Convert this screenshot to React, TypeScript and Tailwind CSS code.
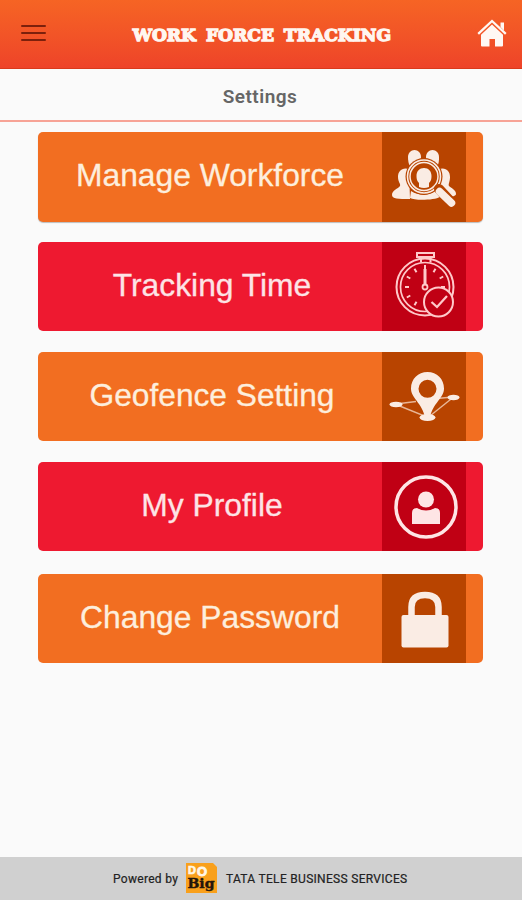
import type { ReactNode } from "react";
import clsx from "clsx";

type Tone = "orange" | "red";

interface MenuItem {
  label: string;
  tone: Tone;
  icon: ReactNode;
  className: string;
  labelClass: string;
}

const items: MenuItem[] = [
  {
    label: "Manage Workforce",
    tone: "orange",
    icon: <WorkforceIcon />,
    className: "h-[90px] shadow-[0_1px_1px_rgba(0,0,0,0.25)]",
    labelClass: "text-[31.8px] pb-[2px]",
  },
  {
    label: "Tracking Time",
    tone: "red",
    icon: <StopwatchIcon />,
    className: "mt-5 h-[89px]",
    labelClass: "text-[31.8px] pl-1 pb-[2px]",
  },
  {
    label: "Geofence Setting",
    tone: "orange",
    icon: <GeofenceIcon />,
    className: "mt-[21px] h-[89px]",
    labelClass: "text-[31.7px] pl-1 pb-px",
  },
  {
    label: "My Profile",
    tone: "red",
    icon: <ProfileIcon />,
    className: "mt-[21px] h-[89px]",
    labelClass: "text-[31.8px] pl-1 pb-[2px]",
  },
  {
    label: "Change Password",
    tone: "orange",
    icon: <LockIcon />,
    className: "mt-[23px] h-[89px]",
    labelClass: "text-[31.8px] pb-px",
  },
];

export default function App() {
  return (
    <div className="flex h-[900px] w-[522px] flex-col overflow-hidden bg-[#fafafa]">
      <header className="flex h-[69px] shrink-0 items-center justify-between border-b border-[#d93a1c] bg-linear-to-b from-[#f66424] to-[#ee4329] pr-[15px] pl-[21px]">
        <button aria-label="Menu" className="flex w-[25px] flex-col gap-[5px] pb-0.5">
          <span className="h-[2px] rounded-full bg-[#7c200c]" />
          <span className="h-[2px] rounded-full bg-[#7c200c]" />
          <span className="h-[2px] rounded-full bg-[#7c200c]" />
        </button>
        <h1 className="flex w-[262px] justify-center pt-[3px] font-['DejaVu_Serif',serif] text-[17.5px] leading-none font-bold whitespace-nowrap text-[#fff6f0] [-webkit-text-stroke:1.3px_#fff6f0]">
          <span className="scale-x-[0.98] [word-spacing:4px]">WORK FORCE TRACKING</span>
        </h1>
        <HomeIcon />
      </header>

      <div className="flex h-[53px] shrink-0 items-center justify-center border-b-2 border-[#f7a396]">
        <h2 className="pt-[3px] pr-0.5 font-[Roboto,sans-serif] text-[19px] leading-none font-semibold tracking-[0.5px] text-[#666]">Settings</h2>
      </div>

      <main className="flex flex-1 flex-col pt-[10px] pr-[39px] pl-[38px]">
        {items.map((item) => (
          <MenuButton key={item.label} item={item} />
        ))}
      </main>

      <footer className="flex h-[43px] shrink-0 items-center bg-[#d0d0d0] pl-[113px] font-[Roboto,sans-serif] text-[12px] tracking-[0.3px] text-[#222] [-webkit-text-stroke:0.2px_#222]">
        <span className="w-[73px] whitespace-nowrap">Powered by</span>
        <DoBigLogo />
        <span className="pl-[9px] whitespace-nowrap">TATA TELE BUSINESS SERVICES</span>
      </footer>
    </div>
  );
}

function MenuButton({ item }: { item: MenuItem }) {
  const orange = item.tone === "orange";
  return (
    <button
      className={clsx(
        "flex w-full shrink-0 overflow-hidden rounded-[5px]",
        orange ? "bg-[#f26e21]" : "bg-[#ee1930]",
        item.className,
      )}
    >
      <span
        className={clsx(
          "flex h-full w-[344px] items-center justify-center font-['Liberation_Sans',Arial,sans-serif] leading-none whitespace-nowrap",
          orange ? "text-[#fdeedd] [-webkit-text-stroke:0.3px_#fdeedd]" : "text-[#fde4e6] [-webkit-text-stroke:0.3px_#fde4e6]",
          item.labelClass,
        )}
      >
        {item.label}
      </span>
      <span className={clsx("h-full w-[84px]", orange ? "bg-[#b84400]" : "bg-[#c00014]")}>{item.icon}</span>
    </button>
  );
}

function HomeIcon() {
  return (
    <svg width="30" height="28" viewBox="0 0 30 28" fill="#fff8f4" className="mb-0.5">
      <path d="M23.500 3.500h3.500v8l-3.500-3.500z" />
      <path d="M1.200 14.800 15 2l13.800 12.800" fill="none" stroke="#fff8f4" strokeWidth="2.300" />
      <path d="M15 5.500 26 15.800V26.500q0 1-1 1H18V20h-5.500v7.500H5q-1 0-1-1V15.800z" />
    </svg>
  );
}

function WorkforceIcon() {
  return (
    <svg width="84" height="89" viewBox="0 0 84 89" fill="#faece4">
      <path d="M26 25c0-4 3-7 6.500-7s6.500 3 6.500 7c0 3-1 5-2.500 6.500L28 34c-1.500-2-2-6-2-9z" />
      <path d="M44 25c0-4 3-7 6.500-7s6.500 3 6.500 7c0 3 0 7-2 9l-8.500-2.500C45 30 44 28 44 25z" />
      <path d="M27 37c-7-2-11 2-11 8 0 5 3 7 2 9-2 3-8 4-8 9 0 4 6 4 18 4z" />
      <path d="M57 37c7-2 11 2 11 8 0 5-2 7-1 9 2 2 7 4 7 8 0 2-4 3-8 3L56 56z" />
      <path d="M29 59c8 5 17 5 24 0l5 6c-5 3-25 4-30 1z" />
      <circle cx="42" cy="44.500" r="18.500" fill="#b84400" />
      <circle cx="42" cy="44.500" r="16.500" fill="none" stroke="#faece4" strokeWidth="1.600" />
      <circle cx="42" cy="44.500" r="14" fill="none" stroke="#faece4" strokeWidth="1.500" />
      <path d="M37 55v-4c-2-2-2.500-4-2.500-7 0-5 3-8 7.500-8s7.500 3 7.500 8c0 3-.5 5-2.500 7v4q-5 2-10 0z" />
      <path d="m57 57 13 14" stroke="#b84400" strokeWidth="10" strokeLinecap="round" />
      <path d="m57.500 59.500 12 11.500" stroke="#faece4" strokeWidth="7.500" strokeLinecap="round" />
    </svg>
  );
}

function StopwatchIcon() {
  return (
    <svg width="84" height="89" viewBox="0 0 84 89" fill="none" stroke="#ffc9ca">
      <path d="M35 11h17v4H35zM39 15.500v5M48.500 15.500v5" strokeWidth="2" />
      <circle cx="43" cy="45" r="28.500" strokeWidth="2" />
      <circle cx="43" cy="45" r="24.500" strokeWidth="1.700" />
      <path
        d="M32.500 26.800l2 3.500M53.500 26.800l-2 3.500M24.800 34.500l3.500 2M61.200 34.500l-3.500 2M23 45h4M59 45h4M24.800 55.500l3.500-2M32.500 63.200l2-3.500M43 23v4.500M43 61v4"
        strokeWidth="2"
      />
      <path d="M43 27v15.500" strokeWidth="3" />
      <circle cx="43" cy="45" r="2.500" strokeWidth="1.800" />
      <circle cx="56.500" cy="60" r="14.500" fill="#c00014" strokeWidth="2" />
      <path d="m49.500 60 5.500 5L65 54" strokeWidth="2.300" />
    </svg>
  );
}

function GeofenceIcon() {
  return (
    <svg width="84" height="89" viewBox="0 0 84 89" fill="#faece4">
      <path d="M14 52.500 46 65.500 71 45.500M14 52 34 49.500M55 46.500l16-1.500" fill="none" stroke="#e8b696" strokeWidth="1.500" />
      <ellipse cx="14" cy="52.500" rx="6.500" ry="2.700" />
      <ellipse cx="71.500" cy="45.500" rx="6" ry="2.700" />
      <ellipse cx="45.500" cy="65.500" rx="8" ry="3.500" />
      <path
        fillRule="evenodd"
        d="M45.500 20C36 20 29 27 29 36.500 29 46 40 51 43 65q2.500 2 5 0C51 51 62 46 62 36.500 62 27 55 20 45.500 20zm0 7.800a9 9 0 1 1 0 18 9 9 0 0 1 0-18z"
      />
    </svg>
  );
}

function ProfileIcon() {
  return (
    <svg width="84" height="89" viewBox="0 0 84 89" fill="#fee5e5">
      <circle cx="44" cy="45" r="30" fill="none" stroke="#fee5e5" strokeWidth="3.500" />
      <circle cx="44" cy="37.500" r="8" />
      <path d="M35 46q9 5 18 0 5 0 5 5v11H30V51q0-5 5-5z" />
    </svg>
  );
}

function LockIcon() {
  return (
    <svg width="84" height="89" viewBox="0 0 84 89" fill="#faece4">
      <path d="M29.500 42V33q0-12 13.500-12t13.500 12v9" fill="none" stroke="#faece4" strokeWidth="6.500" />
      <rect x="19.500" y="41" width="47" height="32.500" rx="2" />
    </svg>
  );
}

function DoBigLogo() {
  return (
    <svg width="31" height="30" viewBox="0 0 31 30" className="-mt-0.5 shrink-0 tracking-normal">
      <path d="M0 0h27l4 4v26H0z" fill="#f9a01b" />
      <g fontWeight="bold">
        <text x="2" y="10.500" fontSize="11" fontFamily="Liberation Sans, sans-serif" fill="#fff6e6" stroke="#fff6e6" strokeWidth="0.700">D</text>
        <text x="11" y="12.500" fontSize="13" fontFamily="Liberation Sans, sans-serif" fill="#fff6e6" stroke="#fff6e6" strokeWidth="0.900">O</text>
        <text x="1.500" y="25" fontSize="13.500" textLength="27" lengthAdjust="spacingAndGlyphs" fontFamily="DejaVu Serif, serif" fill="#24160a" stroke="#24160a" strokeWidth="0.400">Big</text>
      </g>
    </svg>
  );
}
